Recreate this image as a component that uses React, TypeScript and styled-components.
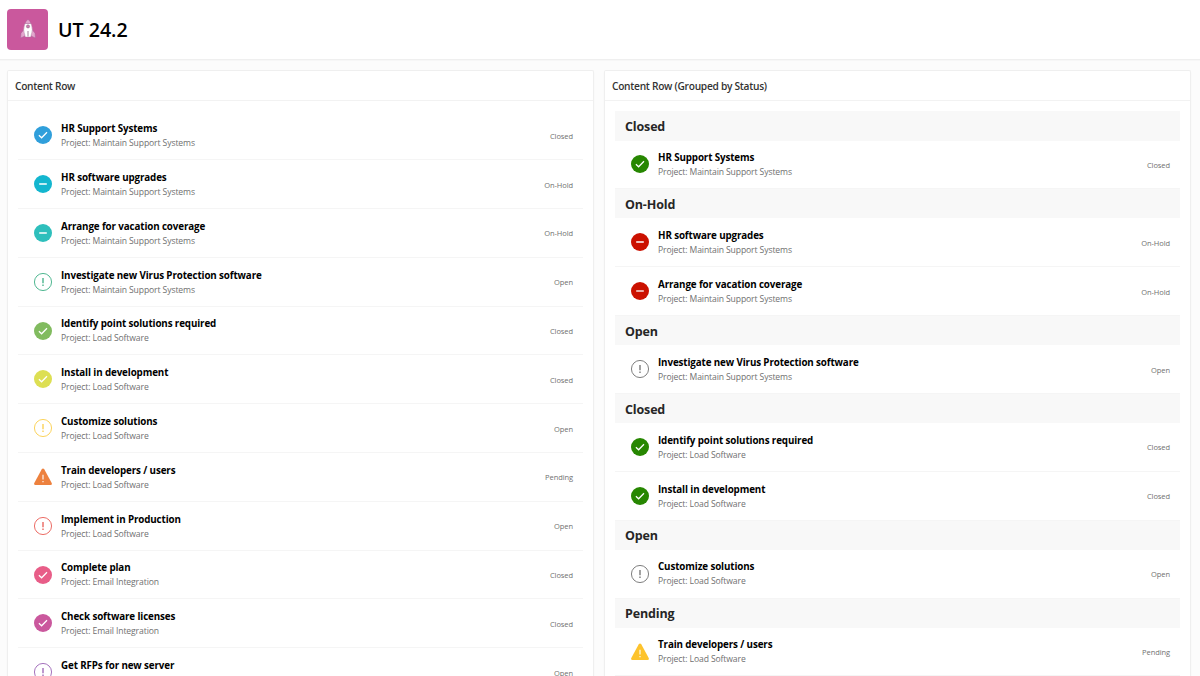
import React from "react";
import styled, { createGlobalStyle } from "styled-components";

const GlobalStyle = createGlobalStyle`
  * { box-sizing: border-box; }
  html, body { margin: 0; height: 100%; overflow: hidden; }
  body {
    background: #fcfcfc;
    font-family: "Open Sans", "Noto Sans", sans-serif;
    color: #262626;
  }
  h1, h2, h3, p { margin: 0; }
`;

const Page = styled.div`
  height: 676px;
  overflow: hidden;
  display: flex;
  flex-direction: column;
`;

const TitleBar = styled.header`
  flex: none;
  height: 60px;
  padding: 0 7px;
  display: flex;
  align-items: center;
  gap: 10px;
  background: #fff;
  border-bottom: 1px solid #efefef;
  box-shadow: 0 1px 1px rgba(0, 0, 0, 0.02);
`;

const AppIcon = styled.div`
  width: 41px;
  height: 41px;
  margin-top: -1px;
  border-radius: 4px;
  background: #ca589d;
  display: flex;
  align-items: center;
  justify-content: center;
`;

const AppTitle = styled.h1`
  font-size: 19.6px;
  line-height: 28px;
  font-weight: 560;
  letter-spacing: 0;
  color: #000;
`;

const Columns = styled.main`
  flex: 1;
  min-height: 0;
  padding: 9.6px 9px 0 7px;
  display: grid;
  grid-template-columns: 1fr 1fr;
  gap: 10px;
`;

const Panel = styled.section`
  background: #fff;
  border: 1px solid #efefef;
  border-bottom: 0;
  border-radius: 2px 2px 0 0;
  overflow: hidden;
  box-shadow: 0 1px 2px rgba(0, 0, 0, 0.03);
`;

const PanelHeader = styled.div`
  height: 30.4px;
  padding: 2px 7px 0;
  display: flex;
  align-items: center;
  border-bottom: 1px solid #f2f2f2;
`;

const PanelTitle = styled.h2`
  font-size: 10.2px;
  font-weight: 600;
  letter-spacing: -0.28px;
  color: #333;
`;

const List = styled.div`
  padding: 10.5px 10px 0;
`;

const GroupHeading = styled.h3`
  height: 29.1px;
  padding: 1px 10px 0;
  display: flex;
  align-items: center;
  background: #f8f8f8;
  font-size: 12.5px;
  font-weight: 700;
  letter-spacing: -0.15px;
`;

const Row = styled.div`
  height: 48.8px;
  padding: 0 10px 0 16px;
  display: flex;
  align-items: center;
  border-bottom: 1px solid #f5f5f5;
`;

const StatusIcon = styled.svg`
  flex: none;
  width: 18px;
  height: 18px;
`;

const RowText = styled.div`
  flex: 1;
  margin-left: 9px;
  padding-top: 1.2px;
`;

const RowTitle = styled.p`
  font-size: 9.8px;
  line-height: 15px;
  font-weight: 700;
  letter-spacing: -0.12px;
  color: #000;
`;

const RowDetail = styled.p`
  font-size: 8.6px;
  line-height: 14.6px;
  letter-spacing: -0.11px;
  color: #707070;
`;

const RowStatus = styled.span`
  padding-top: 1px;
  font-size: 7.5px;
  letter-spacing: -0.08px;
  color: #707070;
`;

type Status = "Closed" | "On-Hold" | "Open" | "Pending";

interface Task {
  title: string;
  project: string;
  status: Status;
  color: string;
}

const maintain = "Maintain Support Systems";
const load = "Load Software";
const email = "Email Integration";

const tasks: Task[] = [
  { title: "HR Support Systems", project: maintain, status: "Closed", color: "#309fdb" },
  { title: "HR software upgrades", project: maintain, status: "On-Hold", color: "#13b6cf" },
  { title: "Arrange for vacation coverage", project: maintain, status: "On-Hold", color: "#2ebfbc" },
  { title: "Investigate new Virus Protection software", project: maintain, status: "Open", color: "#3caf85" },
  { title: "Identify point solutions required", project: load, status: "Closed", color: "#81bb5f" },
  { title: "Install in development", project: load, status: "Closed", color: "#dddf53" },
  { title: "Customize solutions", project: load, status: "Open", color: "#fbce4a" },
  { title: "Train developers / users", project: load, status: "Pending", color: "#ed813e" },
  { title: "Implement in Production", project: load, status: "Open", color: "#e95b54" },
  { title: "Complete plan", project: email, status: "Closed", color: "#e85d88" },
  { title: "Check software licenses", project: email, status: "Closed", color: "#ca589d" },
  { title: "Get RFPs for new server", project: email, status: "Open", color: "#9a62b4" },
];

const statusColors: Record<Status, string> = {
  Closed: "#278701",
  "On-Hold": "#cb1100",
  Open: "#707070",
  Pending: "#fdc32d",
};

function Glyph({ status, color }: { status: Status; color: string }) {
  return (
    <StatusIcon viewBox="0 0 18 18" fill="none">
      {status === "Closed" && (
        <>
          <circle cx="9" cy="9" r="9" fill={color} />
          <path d="M4.9 9.3 7.6 11.8 13 6.3" stroke="#fff" strokeWidth="1.25" />
        </>
      )}
      {status === "On-Hold" && (
        <>
          <circle cx="9" cy="9" r="9" fill={color} />
          <path d="M5.2 9h7.6" stroke="#fff" strokeWidth="1.3" />
        </>
      )}
      {status === "Open" && (
        <>
          <circle cx="9" cy="9" r="8.55" stroke={color} strokeWidth="0.9" />
          <path d="M9 5v5.2M9 11.6v1.3" stroke={color} strokeWidth="1.3" />
        </>
      )}
      {status === "Pending" && (
        <>
          <path
            d="M7.6 1.4Q9 -.6 10.4 1.4L17.7 15Q18.400 16.900 16.600 17H1.400Q-.400 16.900.300 15Z"
            fill={color}
          />
          <path d="M9 6.800v4.800M9 13v1.300" stroke="#fff" strokeWidth="1.100" />
        </>
      )}
    </StatusIcon>
  );
}

function TaskRow({ task, color }: { task: Task; color: string }) {
  return (
    <Row>
      <Glyph status={task.status} color={color} />
      <RowText>
        <RowTitle>{task.title}</RowTitle>
        <RowDetail>Project: {task.project}</RowDetail>
      </RowText>
      <RowStatus>{task.status}</RowStatus>
    </Row>
  );
}

function Rocket() {
  return (
    <svg width="16" height="20" viewBox="0 0 16 20">
      <path
        d="M4 10.500 1 14.200.600 19l4.400-2ZM12 10.500l3 3.700.400 4.800-4.400-2Z"
        fill="#e3a6cd"
        stroke="#a9679a"
        strokeWidth=".5"
      />
      <path
        d="M5 4.400Q2.200 10.500 5.300 18H10.700Q13.800 10.500 11 4.400Z"
        fill="#fff"
        stroke="#a9769b"
        strokeWidth=".4"
      />
      <path d="M5 4.400Q6.300 1.600 8 .4 9.700 1.600 11 4.400Z" fill="#e3a6cd" stroke="#a9679a" strokeWidth=".4" />
      <circle cx="8" cy="7.400" r="1.600" fill="#ca7aae" stroke="#8a6480" strokeWidth=".5" />
      <path d="M8 12v5.500" stroke="#8a6480" strokeWidth=".8" />
    </svg>
  );
}

export default function App() {
  return (
    <>
      <GlobalStyle />
      <Page>
        <TitleBar>
          <AppIcon>
            <Rocket />
          </AppIcon>
          <AppTitle>UT 24.2</AppTitle>
        </TitleBar>
        <Columns>
          <Panel>
            <PanelHeader>
              <PanelTitle>Content Row</PanelTitle>
            </PanelHeader>
            <List>
              {tasks.map((task) => (
                <TaskRow key={task.title} task={task} color={task.color} />
              ))}
            </List>
          </Panel>
          <Panel>
            <PanelHeader>
              <PanelTitle>Content Row (Grouped by Status)</PanelTitle>
            </PanelHeader>
            <List>
              {tasks.slice(0, 8).map((task, i) => (
                <React.Fragment key={task.title}>
                  {(i === 0 || tasks[i - 1].status !== task.status) && (
                    <GroupHeading>{task.status}</GroupHeading>
                  )}
                  <TaskRow task={task} color={statusColors[task.status]} />
                </React.Fragment>
              ))}
            </List>
          </Panel>
        </Columns>
      </Page>
    </>
  );
}
